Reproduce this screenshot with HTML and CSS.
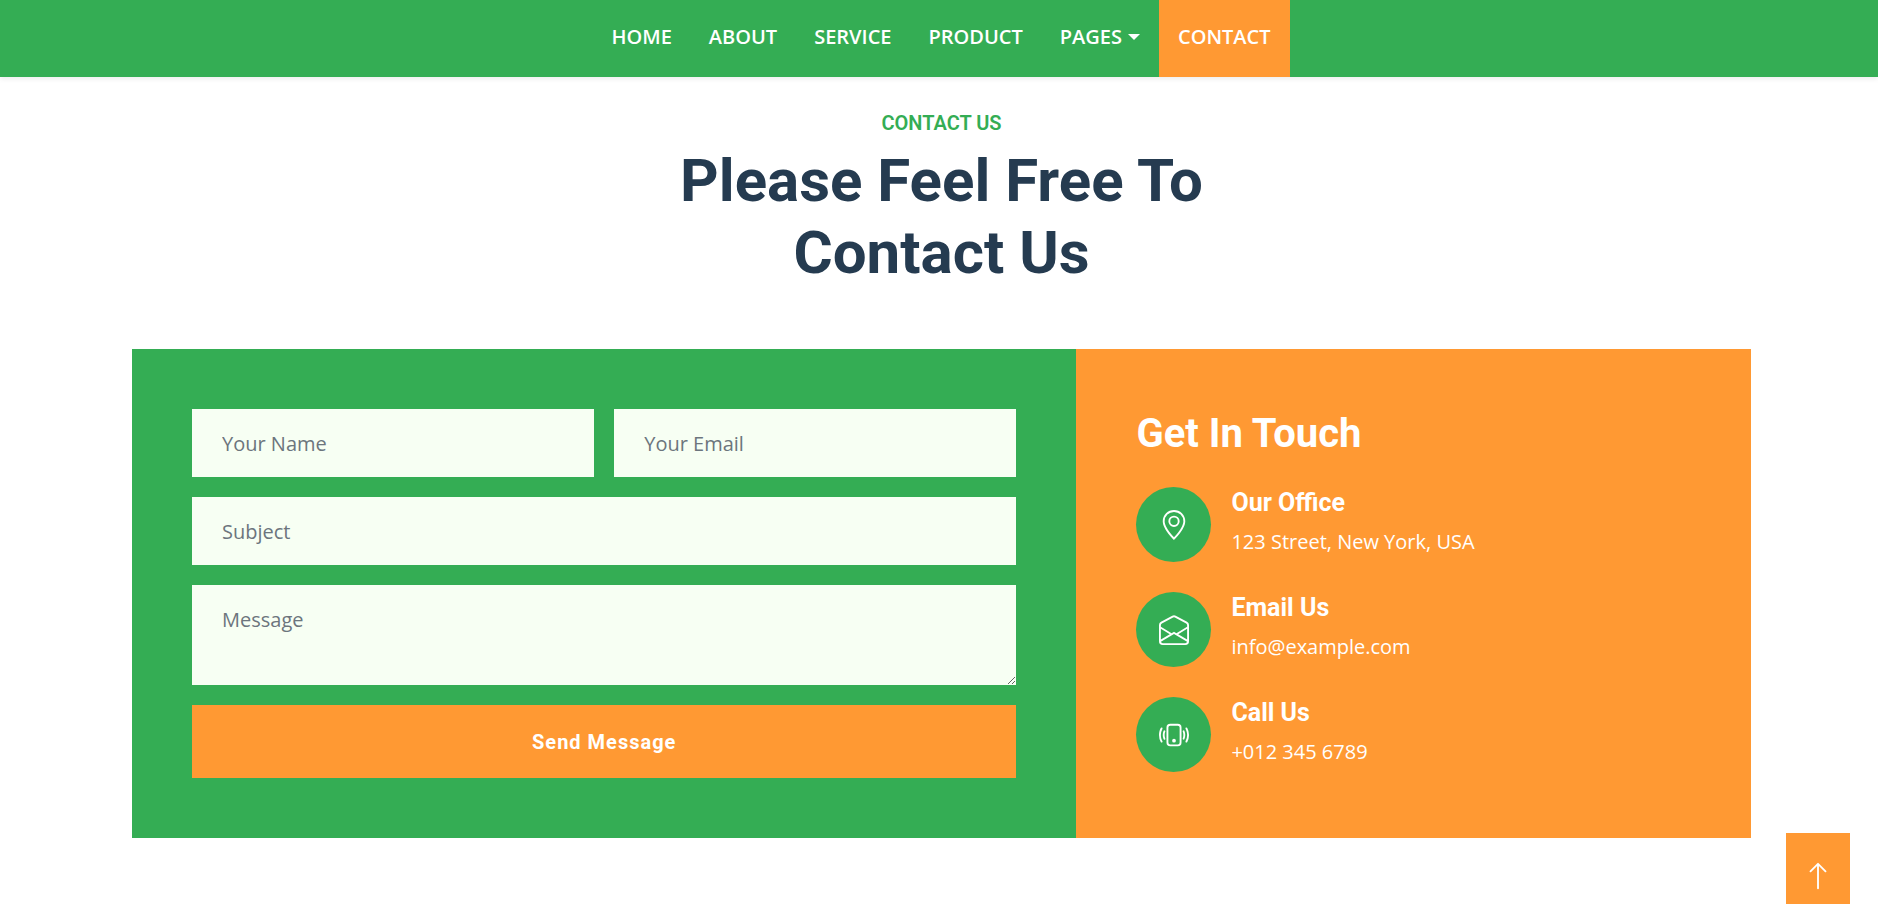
FILE: index.html
```html
<!DOCTYPE html>
<html lang="en">
<head>
<meta charset="utf-8">
<meta name="viewport" content="width=device-width, initial-scale=1">
<title>Contact Us</title>
<link rel="stylesheet" href="styles.css">
</head>
<body>
<header class="site-header">
  <nav class="nav">
    <a class="nav-link" href="#home">Home</a>
    <a class="nav-link" href="#about">About</a>
    <a class="nav-link" href="#service">Service</a>
    <a class="nav-link" href="#product">Product</a>
    <a class="nav-link nav-toggle" href="#pages">Pages</a>
    <a class="nav-link active" href="#contact" aria-current="page">Contact</a>
  </nav>
</header>
<main class="contact">
  <div class="section-title">
    <h6 class="eyebrow">Contact Us</h6>
    <h1 class="headline">Please Feel Free To Contact Us</h1>
  </div>
  <div class="panels">
    <form class="form-panel">
      <input class="field" type="text" placeholder="Your Name" aria-label="Your Name">
      <input class="field" type="email" placeholder="Your Email" aria-label="Your Email">
      <input class="field wide" type="text" placeholder="Subject" aria-label="Subject">
      <textarea class="field message wide" placeholder="Message" aria-label="Message"></textarea>
      <button class="submit wide" type="submit">Send Message</button>
    </form>
    <section class="info-panel">
      <h2 class="info-title">Get In Touch</h2>
      <ul class="info-list">
        <li class="info-item">
          <span class="info-icon">
            <svg class="icon" viewBox="0 0 16 16" aria-hidden="true"><path d="M12.166 8.94c-.524 1.062-1.234 2.12-1.96 3.07A31.493 31.493 0 0 1 8 14.58a31.481 31.481 0 0 1-2.206-2.57c-.726-.95-1.436-2.008-1.96-3.07C3.304 7.867 3 6.862 3 6a5 5 0 0 1 10 0c0 .862-.305 1.867-.834 2.94zM8 16s6-5.686 6-10A6 6 0 0 0 2 6c0 4.314 6 10 6 10z"/><path d="M8 8a2 2 0 1 1 0-4 2 2 0 0 1 0 4zm0 1a3 3 0 1 0 0-6 3 3 0 0 0 0 6z"/></svg>
          </span>
          <div>
            <h3 class="info-heading">Our Office</h3>
            <p class="info-text">123 Street, New York, USA</p>
          </div>
        </li>
        <li class="info-item">
          <span class="info-icon">
            <svg class="icon" viewBox="0 0 16 16" aria-hidden="true"><path d="M8.47 1.318a1 1 0 0 0-.94 0l-6 3.2A1 1 0 0 0 1 5.4v.818l5.724 3.465L8 8.917l1.276.766L15 6.218V5.4a1 1 0 0 0-.53-.882l-6-3.2zM15 7.388l-4.754 2.877L15 13.117V7.388zm-.035 6.874L8 10.083l-6.965 4.18A1 1 0 0 0 2 15h12a1 1 0 0 0 .965-.738zM1 13.117l4.754-2.852L1 7.387v5.73zM7.059.435a2 2 0 0 1 1.882 0l6 3.2A2 2 0 0 1 16 5.4V14a2 2 0 0 1-2 2H2a2 2 0 0 1-2-2V5.4a2 2 0 0 1 1.059-1.765l6-3.2z"/></svg>
          </span>
          <div>
            <h3 class="info-heading">Email Us</h3>
            <p class="info-text">info@example.com</p>
          </div>
        </li>
        <li class="info-item">
          <span class="info-icon">
            <svg class="icon" viewBox="0 0 16 16" aria-hidden="true"><path d="M10 3a1 1 0 0 1 1 1v8a1 1 0 0 1-1 1H6a1 1 0 0 1-1-1V4a1 1 0 0 1 1-1h4zM6 2a2 2 0 0 0-2 2v8a2 2 0 0 0 2 2h4a2 2 0 0 0 2-2V4a2 2 0 0 0-2-2H6z"/><path d="M8 12a1 1 0 1 0 0-2 1 1 0 0 0 0 2zM1.599 4.058a.5.5 0 0 1 .208.676A6.967 6.967 0 0 0 1 8c0 1.18.292 2.292.807 3.266a.5.5 0 0 1-.884.468A7.968 7.968 0 0 1 0 8c0-1.347.334-2.619.923-3.734a.5.5 0 0 1 .676-.208zm12.802 0a.5.5 0 0 1 .676.208A7.967 7.967 0 0 1 16 8a7.967 7.967 0 0 1-.923 3.734.5.5 0 0 1-.884-.468A6.967 6.967 0 0 0 15 8c0-1.18-.292-2.292-.807-3.266a.5.5 0 0 1 .208-.676zM3.057 5.534a.5.5 0 0 1 .284.648A4.986 4.986 0 0 0 3 8c0 .642.12 1.255.34 1.818a.5.5 0 1 1-.93.364A5.986 5.986 0 0 1 2 8c0-.769.145-1.505.41-2.182a.5.5 0 0 1 .647-.284zm9.886 0a.5.5 0 0 1 .648.284C13.855 6.495 14 7.231 14 8c0 .769-.145 1.505-.41 2.182a.5.5 0 0 1-.93-.364C12.88 9.255 13 8.642 13 8c0-.642-.12-1.255-.34-1.818a.5.5 0 0 1 .283-.648z"/></svg>
          </span>
          <div>
            <h3 class="info-heading">Call Us</h3>
            <p class="info-text">+012 345 6789</p>
          </div>
        </li>
      </ul>
    </section>
  </div>
</main>
<a class="back-to-top" href="#top" aria-label="Back to top">
  <svg class="icon" viewBox="0 0 16 16" aria-hidden="true"><path fill-rule="evenodd" d="M8 15a.5.5 0 0 0 .5-.5V2.707l3.146 3.147a.5.5 0 0 0 .708-.708l-4-4a.5.5 0 0 0-.708 0l-4 4a.5.5 0 1 0 .708.708L7.5 2.707V14.5a.5.5 0 0 0 .5.5z"/></svg>
</a>
</body>
</html>
```
FILE: styles.css
```css
:root {
  --green: #34ad54;
  --orange: #ff9933;
  --field: #f7fff3;
  --navy: #253b50;
  --body-font: "Open Sans", sans-serif;
  --title-font: Roboto, sans-serif;
}

* {
  box-sizing: border-box;
}

body {
  margin: 0;
  background: #fff;
  font: 400 20px/30px var(--body-font);
}

h1, h2, h3, h6, p, ul {
  margin: 0;
  padding: 0;
}

.site-header {
  padding-left: 5px;
  background: var(--green);
  box-shadow: 0 2px 5px rgba(0, 0, 0, 0.075);
}

.nav {
  display: flex;
  justify-content: center;
}

.nav-link {
  padding: 22px 19px 25px 18px;
  color: #fff;
  font-weight: 600;
  text-decoration: none;
  text-transform: uppercase;
}

.nav-link.active {
  padding-left: 19px;
  background: var(--orange);
}

.nav-toggle {
  display: flex;
  align-items: center;
  gap: 6px;
}

.nav-toggle::after {
  content: "";
  border: 6px solid transparent;
  border-top-color: #fff;
  border-bottom: 0;
}

.contact {
  padding: 34px 127px 66px 132px;
}

.section-title {
  max-width: 700px;
  margin: 0 auto 60px;
  text-align: center;
  font-family: var(--title-font);
}

.eyebrow {
  margin-bottom: 10px;
  color: var(--green);
  font-size: 20px;
  font-weight: 600;
  line-height: 24px;
  text-transform: uppercase;
}

.headline {
  color: var(--navy);
  font-size: 60px;
  font-weight: 700;
  line-height: 72px;
}

.panels {
  display: grid;
  grid-template-columns: 7fr 5fr;
}

.form-panel {
  display: grid;
  grid-template-columns: 1fr 1fr;
  align-content: start;
  gap: 20px;
  padding: 60px;
  background: var(--green);
}

.wide {
  grid-column: 1 / -1;
}

.field {
  width: 100%;
  height: 68px;
  padding: 8px 30px;
  border: 0;
  border-radius: 0;
  background: var(--field);
  color: #212529;
  font: inherit;
}

.field::placeholder {
  color: #6c757d;
  opacity: 1;
}

.message {
  height: 100px;
  padding-top: 20px;
  resize: vertical;
}

.submit {
  height: 73px;
  border: 0;
  background: var(--orange);
  color: #fff;
  font: 700 20px/30px var(--title-font);
  letter-spacing: 1px;
}

.info-panel {
  padding: 60px;
  background: var(--orange);
  color: #fff;
}

.info-title {
  margin-bottom: 28px;
  font: 700 40px/50px var(--title-font);
}

.info-list {
  display: grid;
  gap: 30px;
  list-style: none;
}

.info-item {
  display: flex;
  gap: 20px;
}

.info-icon {
  display: grid;
  flex: none;
  place-items: center;
  width: 75px;
  height: 75px;
  border-radius: 50%;
  background: var(--green);
}

.icon {
  display: block;
  width: 30px;
  height: 30px;
  fill: #fff;
}

.info-heading {
  margin-bottom: 8px;
  font: 700 25px/32px var(--title-font);
}

.back-to-top {
  position: fixed;
  right: 28px;
  bottom: 0;
  padding: 28px 17px 13px;
  background: var(--orange);
}
```
